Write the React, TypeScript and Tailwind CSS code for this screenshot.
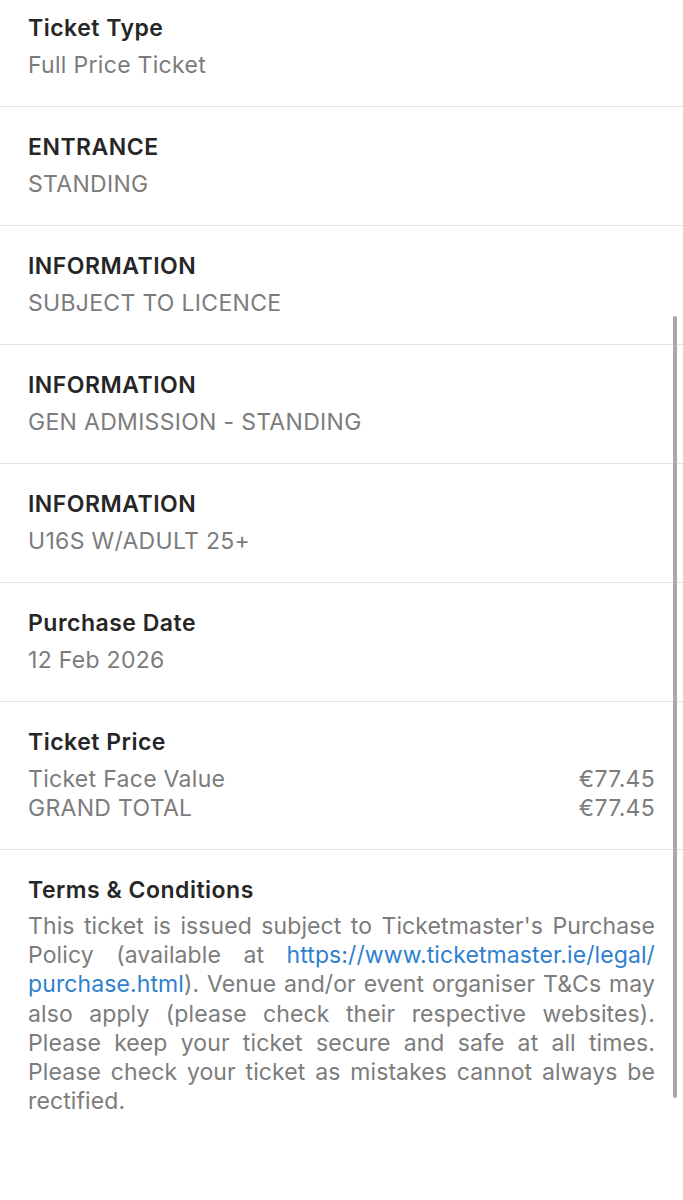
import React from "react";

const rows: { title: string; value: string }[] = [
  { title: "Ticket Type", value: "Full Price Ticket" },
  { title: "ENTRANCE", value: "STANDING" },
  { title: "INFORMATION", value: "SUBJECT TO LICENCE" },
  { title: "INFORMATION", value: "GEN ADMISSION - STANDING" },
  { title: "INFORMATION", value: "U16S W/ADULT 25+" },
  { title: "Purchase Date", value: "12 Feb 2026" },
];

const titleCls = "text-[23px] leading-[37px] font-semibold tracking-[0.5px] text-[#262626]";
const valueCls = "text-[23px] leading-[37px] tracking-[0.3px] text-[#7c7c7c]";
const lineCls = "block text-justify [text-align-last:justify]";
const link = "text-[#2f7fcf]";

export default function App() {
  return (
    <div
      className="relative w-[683px] h-[1200px] overflow-hidden bg-white"
      style={{ fontFamily: "Inter, 'Noto Sans', sans-serif" }}
    >
      <div className="-mt-[12px]">
        {rows.map((r, i) => (
          <div key={i} className="border-b border-[#e2e2e2] pl-[28px] pr-[28px] pt-[22px] pb-[22px]">
            <div className={titleCls}>{r.title}</div>
            <div className={valueCls}>{r.value}</div>
          </div>
        ))}
        <div className="border-b border-[#e2e2e2] pl-[28px] pr-[28px] pt-[22px] pb-[26px]">
          <div className={titleCls}>Ticket Price</div>
          <div className="mt-[4px] text-[23px] leading-[29px] tracking-[0.3px] text-[#7c7c7c]">
            <div className="flex justify-between">
              <span>Ticket Face Value</span>
              <span>€77.45</span>
            </div>
            <div className="flex justify-between">
              <span>GRAND TOTAL</span>
              <span>€77.45</span>
            </div>
          </div>
        </div>
        <div className="pl-[28px] pr-[28px] pt-[22px]">
          <div className={titleCls}>Terms &amp; Conditions</div>
          <p className="mt-[3px] text-[23px] leading-[29.2px] tracking-[0.1px] text-[#7c7c7c] whitespace-nowrap">
            <span className={lineCls}>This ticket is issued subject to Ticketmaster's Purchase</span>
            <span className={lineCls}>
              Policy (available at <span className={link}>https://www.ticketmaster.ie/legal/</span>
            </span>
            <span className={lineCls}>
              <span className={link}>purchase.html</span>). Venue and/or event organiser T&amp;Cs may
            </span>
            <span className={lineCls}>also apply (please check their respective websites).</span>
            <span className={lineCls}>Please keep your ticket secure and safe at all times.</span>
            <span className={lineCls}>Please check your ticket as mistakes cannot always be</span>
            <span className="block">rectified.</span>
          </p>
        </div>
      </div>
      <div className="absolute left-[673px] top-[316px] w-[4px] h-[782px] rounded-full bg-[#a9a9a9]" />
    </div>
  );
}
